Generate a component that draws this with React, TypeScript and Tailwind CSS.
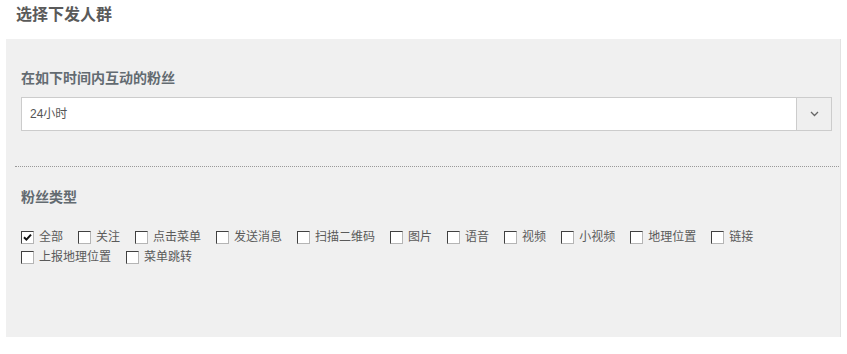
import { useState } from "react";

const FONT = { fontFamily: '"Liberation Sans", "Noto Sans CJK SC", sans-serif' };

const fanTypes = [
  "全部",
  "关注",
  "点击菜单",
  "发送消息",
  "扫描二维码",
  "图片",
  "语音",
  "视频",
  "小视频",
  "地理位置",
  "链接",
  "上报地理位置",
  "菜单跳转",
];

function CheckBox({ label, checked, onToggle }: { label: string; checked: boolean; onToggle: () => void }) {
  return (
    <label className="flex items-center h-[20px] mr-[15px] cursor-pointer" onClick={onToggle}>
      <span className="relative w-[13px] h-[13px] bg-white border border-t-[#404040] border-l-[#404040] border-r-[#b5b5b5] border-b-[#b5b5b5]">
        {checked && (
          <svg className="absolute left-[1px] top-[1px] w-[9px] h-[9px]" viewBox="0 0 9 9">
            <path d="M1 4.2 L3.4 6.6 L8 1.6" fill="none" stroke="#111" strokeWidth={2} />
          </svg>
        )}
      </span>
      <span className="ml-[5px] text-[12px] leading-[20px] text-[#5a5a5a]">{label}</span>
    </label>
  );
}

export default function App() {
  const [checked, setChecked] = useState<Record<string, boolean>>({ 全部: true });

  return (
    <div className="w-[847px] h-[354px] bg-white" style={FONT}>
      {/* Header */}
      <div className="h-[39px] pl-[16px] pt-[6px]">
        <h2 className="text-[16px] leading-[18px] font-bold text-[#5a5a5a]">选择下发人群</h2>
      </div>

      {/* Panel */}
      <div className="ml-[6px] w-[835px] h-[298px] bg-[#f0f0f0] border-r border-[#e2e2e2] pl-[15px] pr-[8px] pt-[29px]">
        <div className="text-[14px] leading-[20px] font-bold text-[#636b71]">在如下时间内互动的粉丝</div>

        <div className="mt-[9px] flex h-[34px] border border-[#ccc] bg-white">
          <div className="flex-1 flex items-center pl-[8px] text-[12px] text-[#555]">24小时</div>
          <div className="w-[35px] flex items-center justify-center bg-[#efefef] border-l border-[#ccc]">
            <svg className="w-[9px] h-[6px]" viewBox="0 0 9 6">
              <path d="M1 1 L4.5 4.5 L8 1" fill="none" stroke="#666" strokeWidth={1.3} />
            </svg>
          </div>
        </div>

        <div className="mt-[35px] -ml-[6px] mr-[-7px] border-t border-dotted border-[#999]" />

        <div className="mt-[20px] text-[14px] leading-[20px] font-bold text-[#636b71]">粉丝类型</div>

        <div className="mt-[20px] flex flex-wrap">
          {fanTypes.map((t) => (
            <CheckBox
              key={t}
              label={t}
              checked={!!checked[t]}
              onToggle={() => setChecked((c) => ({ ...c, [t]: !c[t] }))}
            />
          ))}
        </div>
      </div>
    </div>
  );
}
